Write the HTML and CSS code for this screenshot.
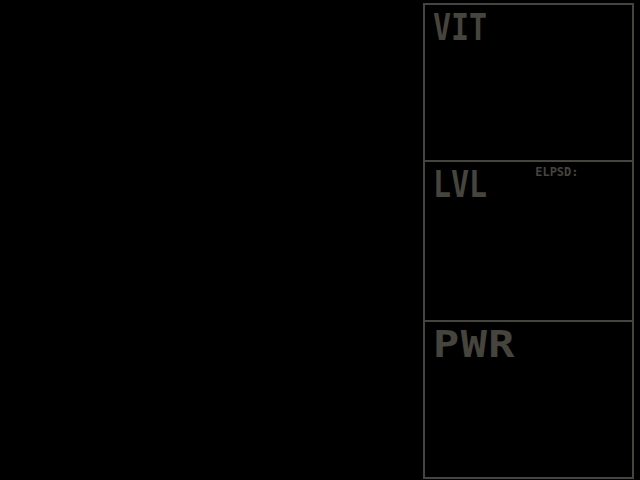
FILE: index.html
```html
<!DOCTYPE html>
<html lang="en">
<head>
  <meta charset="UTF-8">
  <meta name="viewport" content="width=device-width, initial-scale=1.0">
  <title>Status</title>
  <link rel="stylesheet" href="styles.css">
</head>
<body>
  <div class="screen">
    <div class="playfield"></div>

    <div class="side-panel">
      <div class="box box-vit">
        <div class="box-head">
          <span class="label">VIT</span>
        </div>
      </div>
      <div class="box box-lvl">
        <div class="box-head">
          <span class="label">LVL</span>
          <span class="elapsed">ELPSD:</span>
        </div>
      </div>
      <div class="box box-pwr">
        <div class="box-head">
          <span class="label label-wide">PWR</span>
        </div>
      </div>
    </div>
  </div>
</body>
</html>
```

FILE: styles.css
```css
html, body {
  margin: 0;
  height: 100%;
  background-color: #000;
}

.screen {
  display: flex;
  width: 640px;
  height: 480px;
  background-color: #000;
  font-family: "DejaVu Sans Mono", "Liberation Mono", monospace;
  font-weight: bold;
  color: #45443d;
}

.playfield {
  flex: 1;
}

.side-panel {
  display: flex;
  flex-direction: column;
  width: 207px;
  height: 472px;
  margin: 3px 6px 1px 0;
  border: 2px solid #45443d;
}

.box {
  height: 155px;
}

.box-lvl {
  height: 158px;
  border-top: 2px solid #45443d;
  border-bottom: 2px solid #45443d;
}

.box-head {
  display: flex;
  align-items: flex-start;
  padding: 4px 0 0 8px;
}

.label {
  display: inline-block;
  font-size: 30px;
  line-height: 1;
  transform: scaleY(1.23);
  transform-origin: top left;
}

.label-wide {
  letter-spacing: 1px;
  transform: scale(1.45, 1.23);
}

.elapsed {
  margin-left: 48px;
  font-size: 12px;
  line-height: 1;
}
```
